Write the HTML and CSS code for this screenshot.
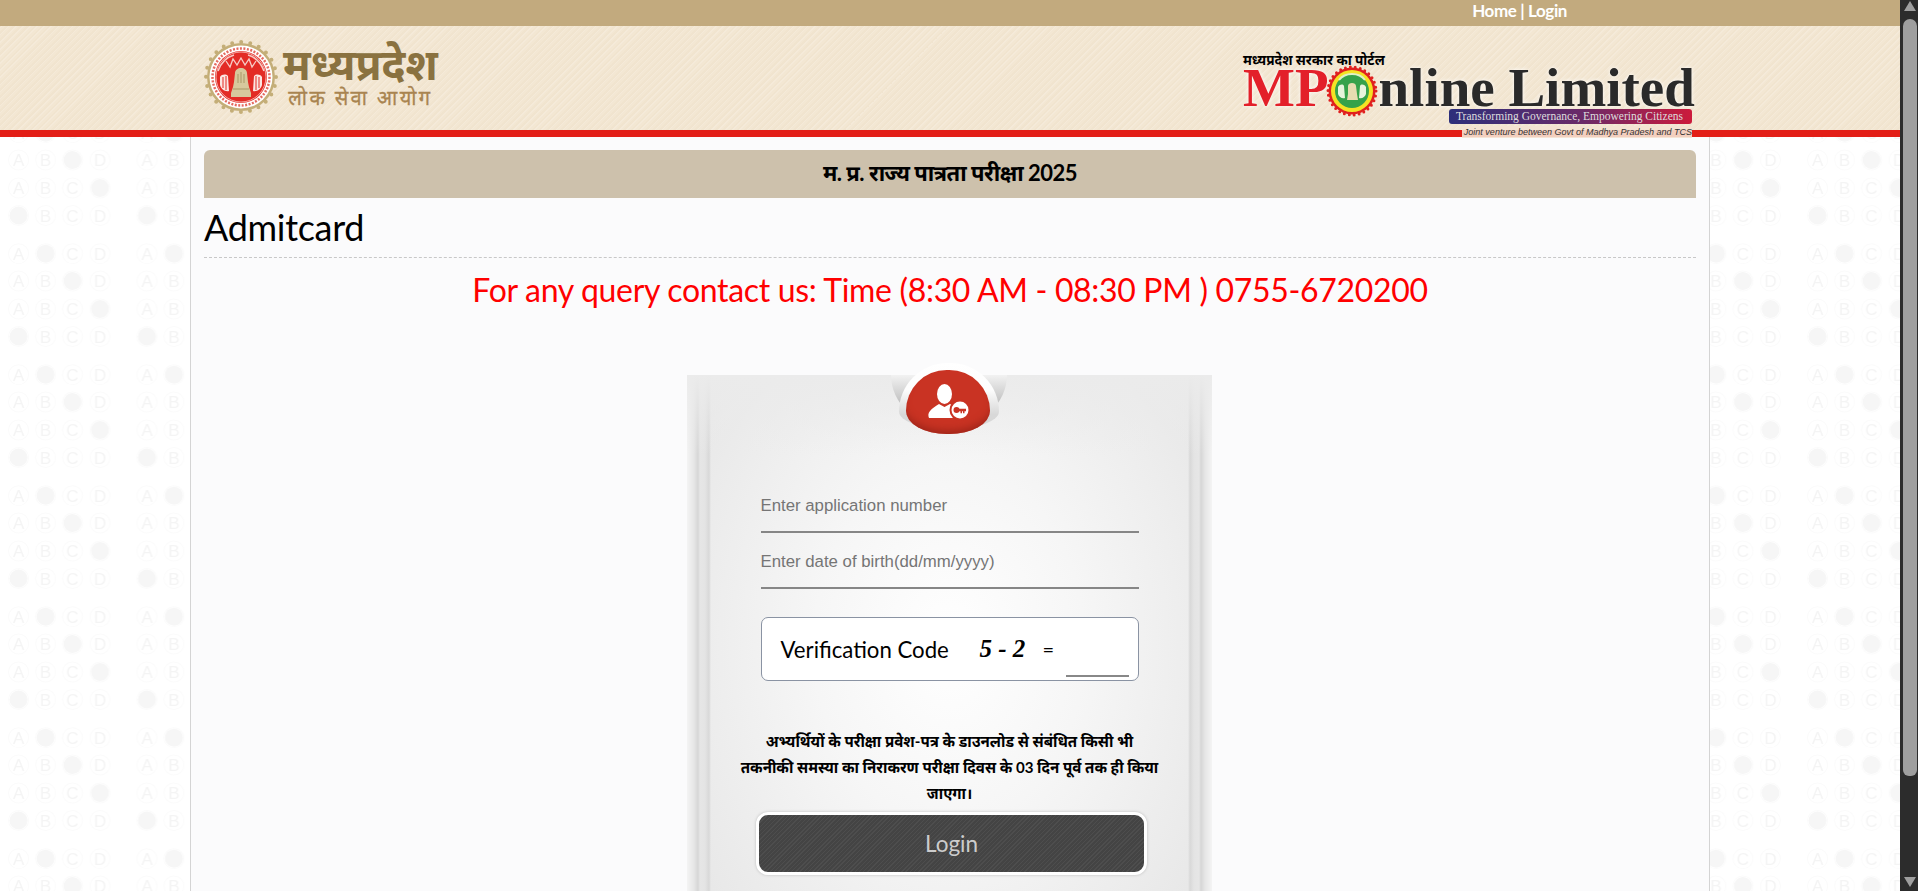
FILE: index.html
```html
<!DOCTYPE html>
<html lang="hi">
<head>
    <meta charset="UTF-8">
    <title>Admitcard</title>
    <link rel="stylesheet" href="styles.css">
</head>
<body>
    <div class="page">
        <!-- omr bubbles behind the page -->
        <svg class="bubble-bg" width="1900" height="891" aria-hidden="true">
            <defs>
                <pattern id="omr" width="128.5" height="121" patternUnits="userSpaceOnUse">
                    <g class="ring">
                        <circle cx="18.5" cy="11.7" r="10"/><circle cx="45.5" cy="11.7" r="10"/><circle cx="72.5" cy="11.7" r="10"/><circle cx="100" cy="11.7" r="10"/>
                        <circle cx="18.5" cy="39" r="10"/><circle cx="45.5" cy="39" r="10"/><circle cx="72.5" cy="39" r="10"/><circle cx="100" cy="39" r="10"/>
                        <circle cx="18.5" cy="67" r="10"/><circle cx="45.5" cy="67" r="10"/><circle cx="72.5" cy="67" r="10"/><circle cx="100" cy="67" r="10"/>
                        <circle cx="18.5" cy="94.5" r="10"/><circle cx="45.5" cy="94.5" r="10"/><circle cx="72.5" cy="94.5" r="10"/><circle cx="100" cy="94.5" r="10"/>
                    </g>
                    <g class="dot">
                        <circle cx="45.5" cy="11.7" r="9"/><circle cx="72.5" cy="39" r="9"/><circle cx="100" cy="67" r="9"/><circle cx="18.5" cy="94.5" r="9"/>
                    </g>
                    <g class="letter">
                        <text x="18.5" y="17.700">A</text><text x="72.5" y="17.700">C</text><text x="100" y="17.700">D</text>
                        <text x="18.5" y="45">A</text><text x="45.5" y="45">B</text><text x="100" y="45">D</text>
                        <text x="18.5" y="73">A</text><text x="45.5" y="73">B</text><text x="72.5" y="73">C</text>
                        <text x="45.5" y="100.500">B</text><text x="72.5" y="100.500">C</text><text x="100" y="100.500">D</text>
                    </g>
                </pattern>
            </defs>
            <rect width="1900" height="891" fill="url(#omr)"/>
        </svg>

        <div class="topbar">
            <a href="#">Home</a> | <a href="#">Login</a>
        </div>

        <header class="header">
            <div class="header-inner">
                <div class="logo-mp">
                    <svg class="emblem" width="74" height="76" viewBox="0 0 74 76">
                        <circle cx="37" cy="38" r="34" fill="#c4ae78"/>
                        <circle cx="37" cy="38" r="35" fill="none" stroke="#c4ae78" stroke-width="4" stroke-linecap="round" stroke-dasharray="0 9.16"/>
                        <circle cx="37" cy="38" r="31.500" fill="#fff"/>
                        <circle cx="37" cy="38" r="28.500" fill="none" stroke="#e56a5f" stroke-width="2.500" stroke-dasharray="2 1.500"/>
                        <circle cx="37" cy="38" r="26" fill="#e32b25"/>
                        <circle cx="37" cy="38" r="25" fill="none" stroke="#f7c8c2" stroke-width="0.800"/>
                        <path d="M14 32c3-8 9-14 16-16M60 32c-3-8-9-14-16-16" fill="none" stroke="#f6c9c4" stroke-width="1.600"/>
                        <path d="M22 22l4 6 3-8 4 6 4-7 4 7 4-6 3 8 4-6" fill="none" stroke="#f7cbc5" stroke-width="1.300"/>
                        <path d="M16 38c2-3 6-3 8-1l1 15c-4 1-8-2-9-6zM58 38c-2-3-6-3-8-1l-1 15c4 1 8-2 9-6z" fill="#fbe6e2"/>
                        <path d="M19 38v11M22 37v14M55 38v11M52 37v14" stroke="#e32b25" stroke-width="1" fill="none"/>
                        <path d="M31 34c0-3 3-5 6-5s6 2 6 5l1 9 1 5 2 6v4H27v-4l2-6 1-5z" fill="#d7c89c"/>
                        <path d="M29 50h16M34 35v9M37 33v11M40 35v9" stroke="#a89766" stroke-width="1" fill="none"/>
                    </svg>
                    <div class="logo-mp-text">
                        <div class="logo-mp-name">मध्यप्रदेश</div>
                        <div class="logo-mp-sub">लोक सेवा आयोग</div>
                    </div>
                </div>
                <div class="logo-online">
                    <div class="logo-online-top">मध्यप्रदेश सरकार का पोर्टल</div>
                    <div class="logo-online-name">
                        <span class="red">MP</span>
                        <svg class="emblem-small" width="52" height="52" viewBox="0 0 52 52">
                            <circle cx="26" cy="26" r="23.5" fill="#e0201f"/>
                            <circle cx="26" cy="26" r="24" fill="none" stroke="#e0201f" stroke-width="3" stroke-linecap="round" stroke-dasharray="0 5.03"/>
                            <circle cx="26" cy="26" r="21" fill="#f4e224"/>
                            <circle cx="26" cy="26" r="17" fill="#35a24a"/>
                            <path d="M12 22c2-3 5-3 6-1l1 12c-3 1-6-1-7-4zM40 22c-2-3-5-3-6-1l-1 12c3 1 6-1 7-4z" fill="#e7f4dc"/>
                            <path d="M22 21c0-2 2-3 4-3s4 1 4 3l1 8 1 6H21l1-6z" fill="#e6dcb0"/>
                            <path d="M13 15c3-4 7-6 13-6s10 2 13 6" fill="none" stroke="#dff0c8" stroke-width="2"/>
                        </svg>
                        <span class="dark">nline Limited</span>
                    </div>
                    <div class="logo-online-ribbon">Transforming Governance, Empowering Citizens</div>
                    <div class="logo-online-jv">Joint venture between Govt of Madhya Pradesh and TCS</div>
                </div>
            </div>
        </header>

        <main class="panel">
            <div class="title-bar">म. प्र. राज्य पात्रता परीक्षा 2025</div>
            <h1 class="page-title">Admitcard</h1>
            <p class="contact">For any query contact us: Time (8:30 AM - 08:30 PM ) 0755-6720200</p>

            <form class="login-card">
                <div class="badge-notch"></div>
                <div class="badge-ring"></div>
                <div class="badge">
                    <svg width="46" height="46" viewBox="0 0 46 46">
                        <ellipse cx="17.5" cy="12" rx="7.5" ry="10" fill="#fff"/>
                        <path d="M12 22l5.500 3 5.500-3 7 4c-2 3-2 7-1 10H2c-1-2-1-5 1-7 2-3 6-5 9-7z" fill="#fff"/>
                        <circle cx="33" cy="28" r="10.500" fill="#c93323"/>
                        <circle cx="33" cy="28" r="8.500" fill="#fff"/>
                        <circle cx="29.500" cy="28" r="3" fill="#c93323"/>
                        <path d="M30 26.700h9v2.600h-1.500v2h-1.500v-2h-1v2h-1.500v-2H30z" fill="#c93323"/>
                    </svg>
                </div>

                <input class="field" type="text" placeholder="Enter application number">
                <input class="field" type="text" placeholder="Enter date of birth(dd/mm/yyyy)">

                <div class="captcha-box">
                    <span class="captcha-label">Verification Code</span>
                    <span class="captcha-sum">5 - 2</span>
                    <span class="captcha-eq">=</span>
                    <input class="captcha-input" type="text">
                </div>

                <p class="notice">अभ्यर्थियों के परीक्षा प्रवेश-पत्र के डाउनलोड से संबंधित किसी भी<br>तकनीकी समस्या का निराकरण परीक्षा दिवस के 03 दिन पूर्व तक ही किया<br>जाएगा।</p>

                <button class="login-btn" type="button">Login</button>
            </form>
        </main>
    </div>

    <!-- scrollbar of the dark browser theme -->
    <div class="scrollbar">
        <div class="arrow-up"></div>
        <div class="thumb-track"><div class="thumb"></div></div>
        <div class="arrow-down"></div>
    </div>
</body>
</html>
```

FILE: styles.css
```css
* {
    box-sizing: border-box;
}

html, body {
    height: 100%;
}

body {
    margin: 0;
    display: flex;
    overflow: hidden;
    background: #fff;
    font-family: "Lato", "Noto Sans", "Noto Sans Devanagari", sans-serif;
    color: #000;
}

.page {
    position: relative;
    flex: 1;
    height: 100%;
    overflow: hidden;
}

/* omr sheet background */
.bubble-bg {
    position: absolute;
    top: 0;
    left: 0;
}
.bubble-bg .ring circle {
    fill: none;
    stroke: #fbfbfb;
    stroke-width: 1;
}
.bubble-bg .dot circle {
    fill: #f6f6f6;
}
.bubble-bg .letter text {
    fill: #f4f4f4;
    font-family: "Liberation Sans", sans-serif;
    font-size: 17px;
    text-anchor: middle;
}

/* top strip */
.topbar {
    position: relative;
    height: 26px;
    padding-right: 333px;
    background: #c2aa7e;
    color: #fff;
    font-size: 17px;
    font-weight: 700;
    line-height: 21px;
    text-align: right;
    letter-spacing: -0.4px;
}
.topbar a {
    color: #fff;
    text-decoration: none;
}

/* header */
.header {
    position: relative;
    z-index: 1;
    height: 111px;
    border-bottom: 7px solid #e31e17;
    background-color: #f3e7d3;
    background-image: repeating-linear-gradient(-45deg, rgba(255,255,255,.14) 0 1px, rgba(190,160,110,.04) 1px 3px, transparent 3px 5px);
}
.header-inner {
    display: flex;
    justify-content: space-between;
    width: 1494px;
    height: 104px;
    margin-left: 204px;
}

.logo-mp {
    display: flex;
    align-items: center;
    gap: 5px;
    padding-bottom: 2px;
}
.logo-mp-text {
    display: flex;
    flex-direction: column;
    align-items: center;
}
.logo-mp-name {
    height: 40px;
    color: #8a7240;
    font-family: "Noto Sans", "Liberation Serif", serif;
    font-size: 42.500px;
    font-weight: 700;
    line-height: 38px;
}
.logo-mp-sub {
    color: #a98450;
    font-size: 20px;
    font-weight: 400;
    -webkit-text-stroke: 0.3px #a98450;
    line-height: 24px;
    letter-spacing: 2.400px;
}

.logo-online {
    display: flex;
    flex-direction: column;
    align-items: flex-end;
    width: 455px;
    padding: 26px 6px 0 0;
}
.logo-online-top {
    align-self: flex-start;
    height: 16px;
    font-size: 13.600px;
    font-weight: 700;
    line-height: 16px;
    white-space: nowrap;
}
.logo-online-name {
    display: flex;
    align-items: center;
    align-self: flex-start;
    height: 40px;
    font-family: "Liberation Serif", serif;
    font-size: 55px;
    font-weight: 700;
    line-height: 40px;
    white-space: nowrap;
    text-shadow: 0 0 4px #fff;
}
.logo-online-name .red {
    color: #e3202a;
}
.logo-online-name .dark {
    color: #2a2a2a;
}
.emblem-small {
    flex: none;
    margin: 6px 1px 0 -3px;
}
.logo-online-ribbon {
    width: 243px;
    height: 15px;
    margin-top: 1px;
    padding-left: 7px;
    border-radius: 3px;
    background: linear-gradient(90deg, #2d2f7a, #6a2a68 55%, #cc1a3c);
    color: #ddd;
    font-family: "Liberation Serif", serif;
    font-size: 11.500px;
    line-height: 15px;
    white-space: nowrap;
}
.logo-online-jv {
    width: 230px;
    height: 12px;
    margin-top: 2px;
    background: rgba(244, 226, 210, 0.9);
    color: #333;
    font-family: "Liberation Sans", sans-serif;
    font-size: 9px;
    font-style: italic;
    line-height: 12px;
    text-align: right;
    white-space: nowrap;
}

/* center column */
.panel {
    position: relative;
    width: 1520px;
    min-height: 1100px;
    margin-left: 190px;
    padding: 13px 13px 0;
    border-left: 1px solid #d4d4d4;
    border-right: 1px solid #d4d4d4;
    background: #fbfbfc;
}
.title-bar {
    height: 48px;
    border-radius: 6px 6px 0 0;
    background: #cdc1ac;
    font-size: 22px;
    font-weight: 700;
    letter-spacing: -0.5px;
    line-height: 46px;
    text-align: center;
}
.page-title {
    height: 60px;
    margin: 0;
    border-bottom: 1px dashed #c8c8c8;
    font-size: 36px;
    font-weight: 400;
    letter-spacing: -0.3px;
    line-height: 59px;
}
.contact {
    margin: 11px 0 0;
    color: #f00;
    font-size: 32px;
    letter-spacing: -0.33px;
    line-height: 42px;
    text-align: center;
}

/* login card */
.login-card {
    position: relative;
    display: flex;
    flex-direction: column;
    align-items: center;
    width: 525px;
    height: 700px;
    margin: 64px 0 0 483px;
    padding-top: 113px;
    background:
        linear-gradient(#ebebeb 0, rgba(235,235,235,0) 80px),
        linear-gradient(90deg, #f4f4f4 0, #e6e6e6 7px, #d6d6d6 11px, #e6e6e6 13px, #e4e4e4 18px, #d8d8d8 22px, rgba(238,238,238,0) 24px),
        linear-gradient(270deg, #f4f4f4 0, #e6e6e6 7px, #d6d6d6 11px, #e6e6e6 13px, #e4e4e4 18px, #d8d8d8 22px, rgba(238,238,238,0) 24px),
        radial-gradient(ellipse 300px 400px at 50% 270px, #fff 0, #f6f6f6 45%, #e8e8e8 100%);
}
.badge-notch {
    position: absolute;
    top: 0;
    left: 204px;
    width: 116px;
    height: 52px;
    border-radius: 0 0 58px 58px / 0 0 52px 52px;
    background: linear-gradient(#f2f2f2 0, #d2d2d2 35%, #a8a8a8 80%);
}
.badge-ring {
    position: absolute;
    top: -12px;
    left: 212px;
    width: 100px;
    height: 66px;
    border-radius: 50px 50px 50px 50px / 50px 50px 18px 18px;
    background: linear-gradient(#fff 0, #fdfdfd 40%, #d8d8d8 78%);
}
.badge {
    position: absolute;
    top: -5px;
    left: 219px;
    display: flex;
    justify-content: center;
    align-items: flex-start;
    width: 84px;
    height: 64px;
    padding: 12px 0 0 4px;
    border-radius: 42px 42px 42px 42px / 42px 42px 24px 24px;
    background: #c93323;
    box-shadow: inset 0 -7px 8px -4px #9c2418;
}

.field {
    display: block;
    width: 378px;
    height: 45px;
    margin-bottom: 11px;
    padding: 0 0 7px;
    border: 0;
    border-bottom: 2px solid #868686;
    outline: 0;
    background: transparent;
    font-family: "Liberation Sans", sans-serif;
    font-size: 16.800px;
}
.field::placeholder {
    color: #757575;
    opacity: 1;
}

.captcha-box {
    display: flex;
    align-items: center;
    width: 378px;
    height: 64px;
    margin-top: 17px;
    padding-left: 19px;
    border: 1px solid #8a93a3;
    border-radius: 7px;
    background: #fff;
}
.captcha-label {
    width: 199px;
    font-size: 22.200px;
}
.captcha-sum {
    width: 63px;
    font-family: "Liberation Serif", serif;
    font-size: 25px;
    font-style: italic;
    font-weight: 700;
}
.captcha-eq {
    width: 23px;
    font-size: 20px;
}
.captcha-input {
    align-self: flex-end;
    width: 63px;
    height: 34px;
    margin-bottom: 3px;
    border: 0;
    border-bottom: 2px solid #888;
    outline: 0;
    background: transparent;
}

.notice {
    margin: 47px 0 0;
    font-size: 15.100px;
    font-weight: 700;
    line-height: 26px;
    text-align: center;
    white-space: nowrap;
}

.login-btn {
    width: 391px;
    height: 63px;
    margin: 6px 0 0 4px;
    border: 3px solid #fff;
    border-radius: 12px;
    background: #444 repeating-linear-gradient(-45deg, rgba(255,255,255,.05) 0 1px, transparent 1px 3px);
    box-shadow: 0 0 3px #bbb;
    color: #ccc;
    font-family: inherit;
    font-size: 22.500px;
}

/* scrollbar */
.scrollbar {
    display: flex;
    flex: none;
    flex-direction: column;
    align-items: center;
    width: 18px;
    height: 100%;
    padding: 1px 1px 4px 3px;
    background: #2c2c2c;
}
.arrow-up,
.arrow-down {
    flex: none;
    width: 0;
    height: 0;
    border-left: 6.500px solid transparent;
    border-right: 6.500px solid transparent;
}
.arrow-up {
    border-bottom: 10px solid #9f9f9f;
}
.arrow-down {
    border-top: 10px solid #9f9f9f;
}
.thumb-track {
    flex: 1;
    width: 100%;
    padding-top: 8px;
}
.thumb {
    width: 100%;
    height: 757px;
    border-radius: 7px 7px 6px 6px;
    background: #9f9f9f;
}
```
